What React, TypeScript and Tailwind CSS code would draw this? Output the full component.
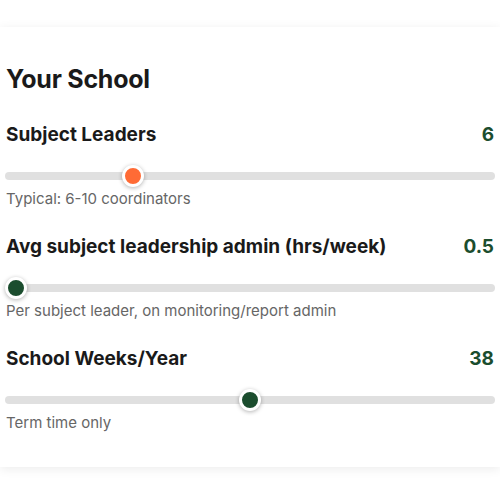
const sliders = [
  {
    label: "Subject Leaders",
    value: "6",
    pct: 0.25,
    thumb: "bg-[#ff6b35]",
    help: "Typical: 6-10 coordinators",
  },
  {
    label: "Avg subject leadership admin (hrs/week)",
    value: "0.5",
    pct: 0,
    thumb: "bg-[#1b4d2e]",
    help: "Per subject leader, on monitoring/report admin",
  },
  {
    label: "School Weeks/Year",
    value: "38",
    pct: 0.5,
    thumb: "bg-[#1b4d2e]",
    help: "Term time only",
  },
];

function Slider({ pct, thumb }: { pct: number; thumb: string }) {
  return (
    <div className="relative mt-[17px] flex h-5 items-center">
      <div className="h-2 w-full rounded-full bg-[#e0e0e0]" />
      {/* thumb travels inside the track, 11px in from each end */}
      <div
        className={`absolute top-1/2 h-[22px] w-[22px] -translate-x-1/2 -translate-y-1/2 rounded-full border-[3px] border-white shadow-[0_1px_4px_rgba(0,0,0,0.3)] ${thumb}`}
        style={{ left: `calc(11px + (100% - 22px) * ${pct})` }}
      />
    </div>
  );
}

export default function App() {
  return (
    <div
      className="min-h-[500px] bg-white pt-[27px]"
      style={{ fontFamily: 'Inter, "Liberation Sans", Arial, sans-serif' }}
    >
      <div className="bg-white px-[5px] pt-[36px] pb-[34px] shadow-[0_2px_10px_rgba(0,0,0,0.08)]">
        <h2 className="pl-px text-[25px] font-bold leading-8 tracking-[-0.01em] text-[#1a1a1a]">
          Your School
        </h2>

        <div className="mt-[26px] flex flex-col gap-6">
          {sliders.map((s) => (
            <div key={s.label}>
              <div className="flex items-center justify-between px-px">
                <span className="text-[19px] font-bold leading-7 text-[#1a1a1a]">
                  {s.label}
                </span>
                <span className="text-[19px] font-bold leading-7 text-[#1b4d2e]">
                  {s.value}
                </span>
              </div>
              <Slider pct={s.pct} thumb={s.thumb} />
              <p className="mt-[3px] px-px text-[15px] leading-5 text-[#666666]">
                {s.help}
              </p>
            </div>
          ))}
        </div>
      </div>
    </div>
  );
}
